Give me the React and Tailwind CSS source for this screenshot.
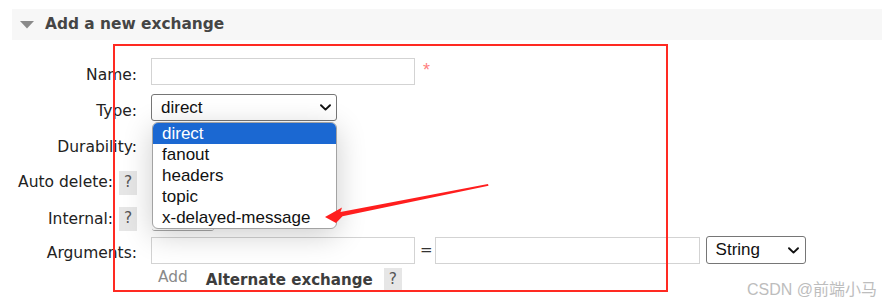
import React from "react";

const dv = "font-['DejaVu_Sans',Verdana,sans-serif]";
const ar = "font-['Liberation_Sans',Arial,sans-serif]";

function Chevron({ className }) {
  return (
    <svg className={className} width="11" height="7" viewBox="0 0 11 7" fill="none">
      <path d="M1 1.2 L5.5 5.6 L10 1.2" stroke="#111" strokeWidth="1.9" strokeLinecap="round" strokeLinejoin="round" />
    </svg>
  );
}

function Badge() {
  return (
    <span className={`flex h-[24px] w-[18px] items-center justify-center bg-[#e6e6e6] text-[15.5px] text-[#555] ${dv}`}>
      ?
    </span>
  );
}

function Label({ children, shift = true, badge = false }) {
  return (
    <div className={`flex w-[137px] shrink-0 items-center justify-end ${shift ? "pt-[8px]" : "pt-[1px]"}`}>
      <span className={`text-[15.5px] leading-none text-[#222] ${dv}`}>{children}</span>
      {badge && (
        <span className="ml-[6px] -mt-[1px]">
          <Badge />
        </span>
      )}
    </div>
  );
}

function TextInput({ w }) {
  return <div className={`h-full ${w} border border-[#d3d3d3] bg-white`} />;
}

export default function App() {
  const options = ["direct", "fanout", "headers", "topic", "x-delayed-message"];
  return (
    <div className="relative h-[307px] w-[882px] overflow-hidden bg-white">
      <div className="pt-[9px] pl-[12px]">
        <div className="flex h-[31px] items-center bg-[#f7f7f7]">
          <svg className="ml-[8px]" width="14" height="8" viewBox="0 0 14 8">
            <polygon points="0,0 14,0 7,7.5" fill="#8a8a8a" />
          </svg>
          <span className={`ml-[11px] pt-[1px] text-[15.4px] font-bold leading-none text-[#454545] ${dv}`}>
            Add a new exchange
          </span>
        </div>
      </div>

      <div className="relative flex flex-col">
        {/* Name */}
        <div className="mt-[18px] flex h-[27px] items-center">
          <Label>Name:</Label>
          <div className="ml-[14px] flex h-full items-center">
            <TextInput w="w-[264px]" />
            <span className={`ml-[8px] self-start pt-[3px] text-[18px] leading-none text-[#ff8080] ${ar}`}>*</span>
          </div>
        </div>

        {/* Type */}
        <div className="mt-[9px] flex h-[27px] items-center">
          <Label>Type:</Label>
          <div className="relative ml-[14px] h-full">
            <div className={`flex h-full w-[186px] items-center justify-between rounded-[3px] border border-[#767676] bg-white pl-[9px] pr-[5px] text-[17px] text-[#111] ${ar}`}>
              <span>direct</span>
              <Chevron />
            </div>
            {/* open dropdown list */}
            <div className="absolute left-[1px] top-[28px] z-10 w-[185px] rounded-[6px] border border-[#a3a3a3] bg-white shadow-[0_6px_30px_rgba(0,0,0,0.2)]">
              {options.map((o, i) => (
                <div
                  key={o}
                  className={`flex h-[21px] items-center pl-[9px] text-[17px] leading-none ${ar} ${
                    i === 0 ? "rounded-t-[5px] bg-[#1b68d2] text-white" : "text-[#111]"
                  }`}
                >
                  {o}
                </div>
              ))}
            </div>
          </div>
        </div>

        {/* Durability */}
        <div className="mt-[13px] flex h-[27px] items-center">
          <Label shift={false}>Durability:</Label>
        </div>

        {/* Auto delete */}
        <div className="mt-[9px] flex h-[25px] items-center">
          <Label shift={false} badge>Auto delete:</Label>
        </div>

        {/* Internal */}
        <div className="mt-[12px] flex h-[24px] items-center">
          <Label shift={false} badge>Internal:</Label>
          <div className="ml-[15px] h-full w-[62px] rounded-b-[3px] border-b border-[#a8a8a8]" />
        </div>

        {/* Arguments */}
        <div className="mt-[5px] flex h-[28px] items-center">
          <Label>Arguments:</Label>
          <div className="ml-[14px] flex h-[27px] items-center">
            <TextInput w="w-[264px]" />
            <span className={`ml-[5px] text-[15px] leading-none text-[#333] ${dv}`}>=</span>
            <div className="ml-[2px] h-full">
              <TextInput w="w-[265px]" />
            </div>
          </div>
          <div className={`ml-[6px] flex h-[28px] w-[100px] items-center justify-between rounded-[3px] border border-[#767676] bg-white pl-[9px] pr-[6px] text-[17px] text-[#111] ${ar}`}>
            <span>String</span>
            <Chevron />
          </div>
        </div>

        {/* Add / Alternate exchange */}
        <div className="mt-[4px] flex h-[24px] items-center pl-[158px]">
          <span className={`-mt-[4px] text-[15.4px] leading-none text-[#8a8a8a] ${dv}`}>Add</span>
          <span className={`ml-[18px] pt-[1px] text-[15.1px] font-bold leading-none text-[#3d3d3d] ${dv}`}>Alternate exchange</span>
          <span className="ml-[11px]">
            <Badge />
          </span>
        </div>
      </div>

      {/* red annotation rectangle */}
      <div className="pointer-events-none absolute left-[113px] top-[44px] h-[248px] w-[555px] border-[2px] border-[#ff2a22]" />

      {/* red annotation arrow */}
      <svg className="pointer-events-none absolute left-0 top-0 z-20" width="882" height="307" viewBox="0 0 882 307">
        <polygon
          points="325,217 342,207.5 340.5,212 488,184 488.5,185.8 342.5,216.2 336,223"
          fill="#ff1e1e"
        />
      </svg>

      {/* watermark */}
      <div className={`absolute bottom-[9px] right-[5px] text-[16px] leading-none text-[#bdbdbd] font-['Liberation_Sans','Noto_Sans_CJK_SC',sans-serif]`}>
        CSDN @前端小马
      </div>
    </div>
  );
}
